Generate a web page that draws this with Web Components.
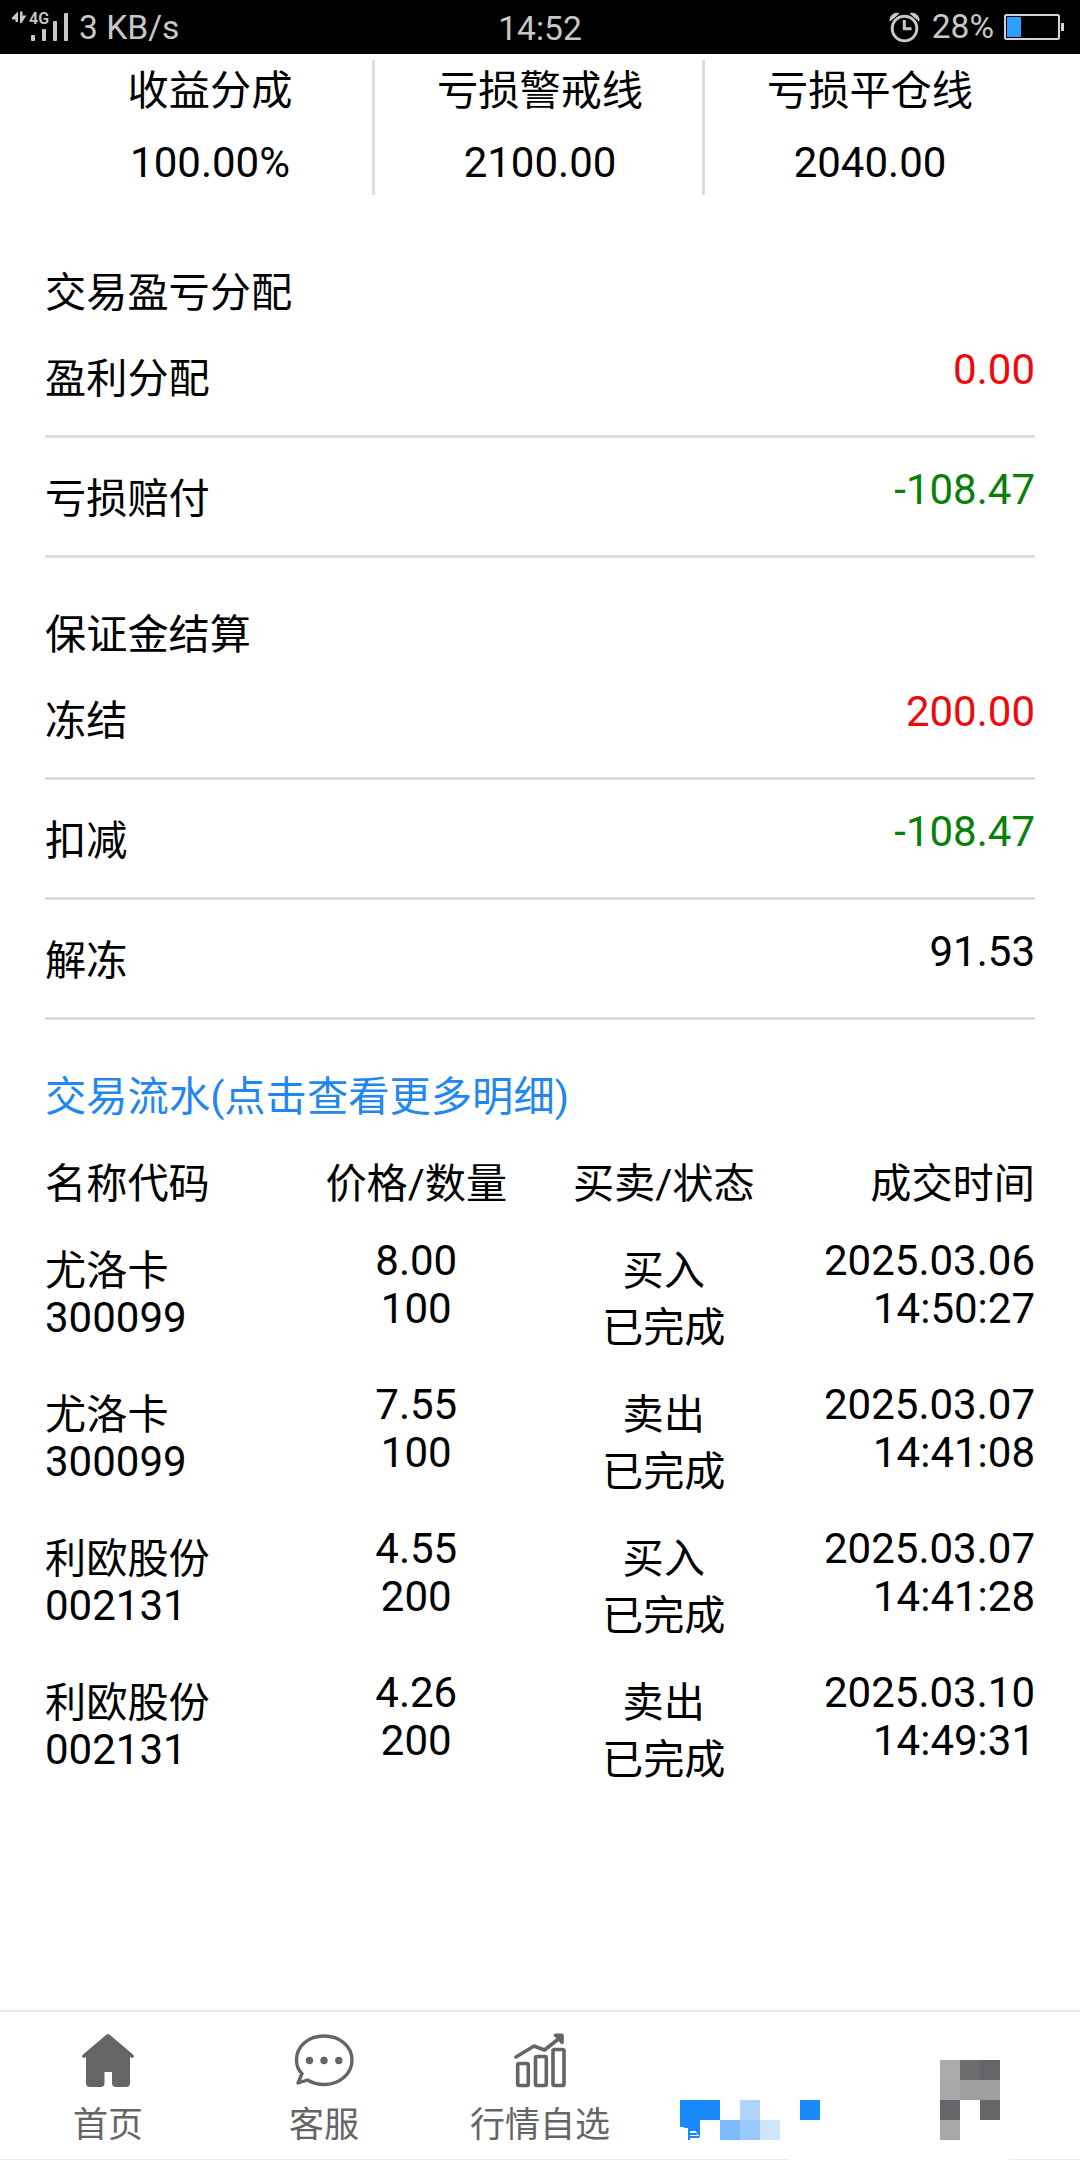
<!DOCTYPE html>
<html lang="zh-CN">
<head>
<meta charset="UTF-8">
<meta name="viewport" content="width=device-width, initial-scale=1">
<title>交易详情</title>
<style>
  :root {
    --primary: #1989fa;
    --line: #dcdede;
    --muted: #646566;
    --red: #ee0a0a;
    --green: #078007;
  }

  body {
    margin: 0;
    background: #fff;
    color: #000;
    font-family: Roboto, "Noto Sans CJK SC", sans-serif;
    font-size: 42px;
  }
</style>
</head>
<body>
<trade-page></trade-page>

<script>
class StatusBar extends HTMLElement {
  constructor() {
    super();
    this.attachShadow({ mode: 'open' });
  }

  connectedCallback() {
    this.shadowRoot.innerHTML = `
      <style>
        :host {
          display: grid;
          grid-template-columns: 1fr auto 1fr;
          height: 54px;
          background: #000;
          color: #c8c8c8;
          font-size: 33.6px;
          line-height: 54px;
        }

        svg {
          display: block;
          flex: none;
        }

        .left,
        .right {
          display: flex;
        }

        .left span {
          margin: 1px 0 0 9px;
        }

        .time {
          padding-top: 2px;
        }

        .right {
          justify-content: flex-end;
          padding-right: 15px;
        }

        .right span {
          margin: 0 10px 0 11px;
        }
      </style>
      <div class="left">
        <svg width="70" height="54" fill="#c8c8c8">
          <path d="M12 17.5L18 11.500V22H15.500V19.500H12ZM20 11.500H22.500V15.500H26.500L21.500 23H20Z"/>
          <text x="29" y="24" font-family="Roboto, sans-serif" font-size="16" font-weight="600">4G</text>
          <rect x="31" y="35" width="4" height="6" rx="1"/>
          <rect x="42" y="29" width="4" height="12" rx="1"/>
          <rect x="53" y="21" width="4" height="20" rx="1"/>
          <rect x="64" y="13" width="4" height="28" rx="1"/>
        </svg>
        <span>3 KB/s</span>
      </div>
      <div class="time">14:52</div>
      <div class="right">
        <svg width="32" height="54" fill="none" stroke="#c8c8c8" stroke-width="3">
          <circle cx="15.500" cy="28.500" r="12.300"/>
          <path d="M15.300 20V28.700H22.500"/>
          <path d="M1 21A7 7 0 0 1 10 13.500ZM30 21A7 7 0 0 0 21 13.500Z" fill="#c8c8c8" stroke="#c8c8c8" stroke-width="1"/>
        </svg>
        <span>28%</span>
        <svg width="61" height="54">
          <rect x="1" y="15" width="54" height="24" rx="1.500" fill="none" stroke="#d4d4d4" stroke-width="2"/>
          <rect x="3" y="17" width="14" height="20" fill="#2b9fff"/>
          <rect x="57" y="23" width="3" height="8" fill="#d4d4d4"/>
        </svg>
      </div>
    `;
  }
}

class StatItem extends HTMLElement {
  constructor() {
    super();
    this.attachShadow({ mode: 'open' });
  }

  connectedCallback() {
    this.shadowRoot.innerHTML = `
      <style>
        :host {
          display: block;
          box-sizing: border-box;
          height: 135px;
          padding: 3px 0 0 3px;
          border-right: 3px solid var(--line);
          text-align: center;
        }

        :host(:last-of-type) {
          border-right-color: transparent;
        }

        .label {
          font-size: 41.2px;
          line-height: 57px;
        }

        .value {
          padding-top: 19px;
          line-height: 48px;
        }
      </style>
      <div class="label">${this.getAttribute('label')}</div>
      <div class="value"><slot></slot></div>
    `;
  }
}

class CellGroup extends HTMLElement {
  constructor() {
    super();
    this.attachShadow({ mode: 'open' });
  }

  connectedCallback() {
    this.shadowRoot.innerHTML = `
      <style>
        :host {
          display: block;
        }

        .title {
          box-sizing: border-box;
          height: 102px;
          padding-top: 49px;
          font-size: 41.2px;
          line-height: 57px;
        }

        :host([link]) .title {
          color: #1f87f0;
          font-size: 41.3px;
        }
      </style>
      <div class="title">${this.getAttribute('label')}</div>
      <slot></slot>
    `;
  }
}

class CellRow extends HTMLElement {
  constructor() {
    super();
    this.attachShadow({ mode: 'open' });
  }

  connectedCallback() {
    this.shadowRoot.innerHTML = `
      <style>
        :host {
          display: flex;
          justify-content: space-between;
          box-sizing: border-box;
          height: 120px;
          padding-top: 28px;
          border-bottom: 3px solid var(--line);
          line-height: 48px;
        }

        .label {
          padding-top: 5px;
          font-size: 41.2px;
          line-height: 57px;
        }

        :host([type="up"]) .value {
          color: var(--red);
        }

        :host([type="down"]) .value {
          color: var(--green);
        }
      </style>
      <div class="label">${this.getAttribute('label')}</div>
      <div class="value"><slot></slot></div>
    `;
  }
}

class TradeTable extends HTMLElement {
  constructor() {
    super();
    this.attachShadow({ mode: 'open' });
  }

  connectedCallback() {
    const rows = [
      ['尤洛卡', '300099', '8.00', '100', '买入', '2025.03.06', '14:50:27'],
      ['尤洛卡', '300099', '7.55', '100', '卖出', '2025.03.07', '14:41:08'],
      ['利欧股份', '002131', '4.55', '200', '买入', '2025.03.07', '14:41:28'],
      ['利欧股份', '002131', '4.26', '200', '卖出', '2025.03.10', '14:49:31']
    ];

    this.shadowRoot.innerHTML = `
      <style>
        :host {
          display: block;
        }

        .row {
          display: grid;
          grid-template-columns: repeat(4, 1fr);
          height: 144px;
          line-height: 48px;
          text-align: center;
        }

        .head {
          height: 115px;
          padding-top: 34px;
          box-sizing: border-box;
          font-size: 41.2px;
          line-height: 57px;
        }

        .row > :first-child {
          text-align: left;
        }

        .row > :last-child {
          text-align: right;
        }

        /* Chinese lines are taller and sit lower than the digits */
        .zh {
          padding: 13px 0 2px;
          font-size: 41.2px;
          line-height: 42px;
        }
      </style>
      <div class="row head">
        <div>名称代码</div>
        <div>价格/数量</div>
        <div>买卖/状态</div>
        <div>成交时间</div>
      </div>
      ${rows.map(([name, code, price, count, side, date, time]) => `
        <div class="row">
          <div><div class="zh">${name}</div><div>${code}</div></div>
          <div><div>${price}</div><div>${count}</div></div>
          <div><div class="zh">${side}</div><div class="zh">已完成</div></div>
          <div><div>${date}</div><div>${time}</div></div>
        </div>
      `).join('')}
    `;
  }
}

class TabItem extends HTMLElement {
  constructor() {
    super();
    this.attachShadow({ mode: 'open' });
  }

  connectedCallback() {
    const label = this.getAttribute('label');
    this.shadowRoot.innerHTML = `
      <style>
        :host {
          display: block;
          color: var(--muted);
          font-size: 35px;
          line-height: 52px;
          text-align: center;
        }

        ::slotted(svg) {
          display: block;
          margin: 0 auto;
        }
      </style>
      <slot></slot>
      ${label ? `<div>${label}</div>` : ''}
    `;
  }
}

class TabBar extends HTMLElement {
  constructor() {
    super();
    this.attachShadow({ mode: 'open' });
  }

  connectedCallback() {
    this.shadowRoot.innerHTML = `
      <style>
        :host {
          display: grid;
          grid-template-columns: repeat(5, 1fr);
          box-sizing: border-box;
          height: 150px;
          border-top: 2px solid #ebebeb;
          background: linear-gradient(#ebebeb, #ebebeb) 0 100% / 789px 1px no-repeat,
            linear-gradient(#ebebeb, #ebebeb) 100% 100% / 71px 1px no-repeat;
        }
      </style>
      <tab-item label="首页">
        <svg width="60" height="88" viewBox="78 2012 60 88">
          <path fill="#646566" d="M106 2035Q108 2033 110 2035L133 2054.5Q135 2057.5 132 2058L130 2057V2083Q130 2087 126 2087H116Q112 2087 112 2083V2072H104.500V2083Q104.500 2087 100.500 2087H90Q86 2087 86 2083V2057L84 2058Q81 2057.500 83 2054.500Z"/>
        </svg>
      </tab-item>
      <tab-item label="客服">
        <svg width="64" height="88" viewBox="292 2012 64 88">
          <path fill="none" stroke="#646566" stroke-width="3.400" stroke-linejoin="round" d="M302 2073.500C298 2070 296.500 2065 296.500 2060C296.500 2046 308.500 2036 324 2036S352 2046 352 2060S339.500 2084.500 324 2084.500C318 2084.500 312.500 2083 307.500 2080L298 2083Z"/>
          <circle cx="309.500" cy="2060.500" r="3.700" fill="#646566"/>
          <circle cx="324" cy="2060.500" r="3.700" fill="#646566"/>
          <circle cx="338.800" cy="2060.500" r="3.700" fill="#646566"/>
        </svg>
      </tab-item>
      <tab-item label="行情自选">
        <svg width="60" height="88" viewBox="510 2012 60 88" fill="none" stroke="#646566" stroke-width="3.600" stroke-linecap="round" stroke-linejoin="round">
          <rect x="517.700" y="2063.500" width="10.600" height="22" rx="1.500"/>
          <rect x="535.500" y="2056.500" width="10.800" height="29" rx="1.500"/>
          <rect x="553" y="2049.500" width="11" height="36" rx="1.500"/>
          <path d="M516 2057L534 2046L544.500 2050L561 2037"/>
          <path d="M555.500 2035.200H562V2042.500L558 2037Z"/>
        </svg>
      </tab-item>
      <tab-item>
        <svg width="216" height="146" viewBox="648 2012 216 146" shape-rendering="crispEdges">
          <path fill="#1989fa" d="M680 2100H720V2120H700V2138L696 2131H690V2133H697V2135H690V2136H699V2138H690V2140H688V2128L680 2127ZM800 2100H820V2120H800Z"/>
          <rect x="740" y="2100" width="20" height="20" fill="#b0d5fd"/>
          <rect x="720" y="2120" width="20" height="20" fill="#7bbafb"/>
          <rect x="740" y="2120" width="20" height="20" fill="#99cafc"/>
          <rect x="760" y="2120" width="20" height="20" fill="#d1e6fd"/>
        </svg>
      </tab-item>
      <tab-item>
        <svg width="216" height="146" viewBox="864 2012 216 146" shape-rendering="crispEdges">
          <rect x="940" y="2060" width="20" height="20" fill="#a9abab"/>
          <rect x="960" y="2060" width="20" height="20" fill="#6b6c6e"/>
          <path fill="#646568" d="M980 2060H1000V2080H980ZM940 2100H960V2120H940ZM980 2100H1000V2120H980Z"/>
          <path fill="#a8a8a8" d="M940 2080H960V2100H940ZM940 2120H960V2140H940Z"/>
          <rect x="960" y="2080" width="40" height="20" fill="#9e9e9e"/>
        </svg>
      </tab-item>
    `;
  }
}

class TradePage extends HTMLElement {
  constructor() {
    super();
    this.attachShadow({ mode: 'open' });
  }

  connectedCallback() {
    this.shadowRoot.innerHTML = `
      <style>
        :host {
          display: flex;
          flex-direction: column;
          width: 1080px;
          height: 2160px;
          overflow: hidden;
        }

        main {
          flex: 1;
          padding: 6px 45px 0;
        }

        .stats {
          display: grid;
          grid-template-columns: repeat(3, 1fr);
          margin-bottom: 21px;
        }
      </style>
      <status-bar></status-bar>
      <main>
        <div class="stats">
          <stat-item label="收益分成">100.00%</stat-item>
          <stat-item label="亏损警戒线">2100.00</stat-item>
          <stat-item label="亏损平仓线">2040.00</stat-item>
        </div>
        <cell-group label="交易盈亏分配">
          <cell-row label="盈利分配" type="up">0.00</cell-row>
          <cell-row label="亏损赔付" type="down">-108.47</cell-row>
        </cell-group>
        <cell-group label="保证金结算">
          <cell-row label="冻结" type="up">200.00</cell-row>
          <cell-row label="扣减" type="down">-108.47</cell-row>
          <cell-row label="解冻">91.53</cell-row>
        </cell-group>
        <cell-group label="交易流水(点击查看更多明细)" link>
          <trade-table></trade-table>
        </cell-group>
      </main>
      <tab-bar></tab-bar>
    `;
  }
}

customElements.define('status-bar', StatusBar);
customElements.define('stat-item', StatItem);
customElements.define('cell-group', CellGroup);
customElements.define('cell-row', CellRow);
customElements.define('trade-table', TradeTable);
customElements.define('tab-item', TabItem);
customElements.define('tab-bar', TabBar);
customElements.define('trade-page', TradePage);
</script>
</body>
</html>
